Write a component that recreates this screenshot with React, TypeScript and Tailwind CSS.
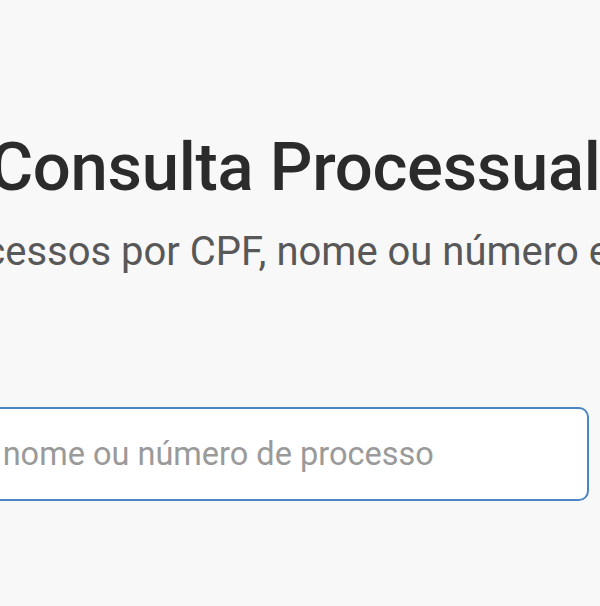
export default function App() {
  return (
    <div className="h-screen w-full overflow-hidden bg-[#f8f8f8] font-['Roboto','Liberation_Sans',sans-serif]">
      <div className="ml-[-305px] flex w-[1200px] flex-col items-center pt-[134px] text-center">
        <h1 className="whitespace-nowrap text-[67px] font-medium leading-none tracking-[-0.3px] text-[#2b2b2b]">
          Consulta Processual
        </h1>
        <p className="mr-[8px] mt-[31px] whitespace-nowrap text-[40px] leading-none text-[#585858]">
          Pesquise processos por CPF, nome ou número em segundos
        </p>
        <div className="mt-[135px] flex w-full">
          <input
            className="ml-[120px] h-[94px] w-[774px] rounded-[10px] border-2 border-[#4a86c4] bg-white px-6 text-[32.5px] text-[#333] outline-none placeholder:text-[#9a9a9a]"
            placeholder="Digite CPF, nome ou número de processo"
          />
        </div>
      </div>
    </div>
  )
}
